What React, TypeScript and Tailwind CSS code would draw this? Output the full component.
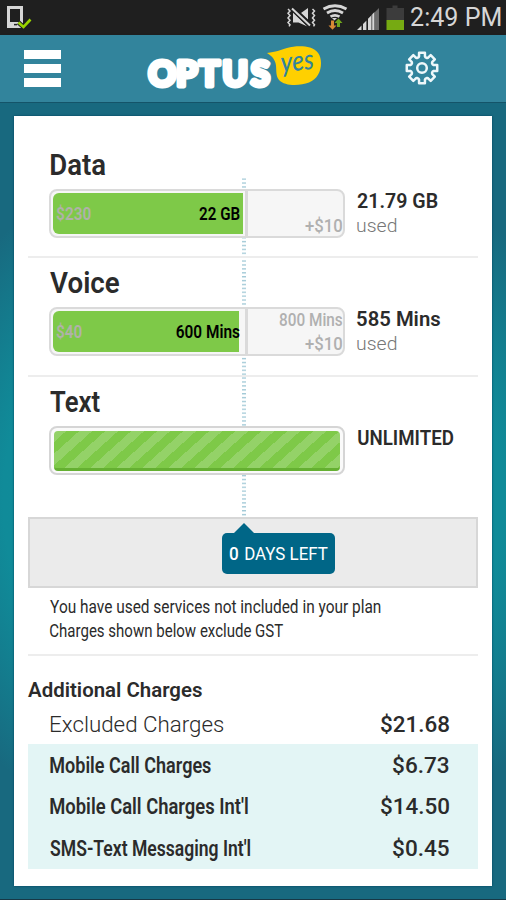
import { useLayoutEffect, useRef, useState } from "react";
import clsx from "clsx";

/** One line of condensed lettering whose ink fills exactly `width` pixels. */
function Line({ text, width, className }: { text: string; width: number; className?: string }) {
  const ref = useRef<HTMLSpanElement>(null);
  const [transform, setTransform] = useState("none");
  useLayoutEffect(() => {
    const el = ref.current;
    const ctx = document.createElement("canvas").getContext("2d");
    if (!el || !ctx) return;
    const cs = getComputedStyle(el);
    ctx.font = `${cs.fontWeight} ${cs.fontSize} Roboto`;
    const m = ctx.measureText(text);
    const left = -m.actualBoundingBoxLeft;
    const s = width / (m.actualBoundingBoxRight - left);
    setTransform(`translateX(${0.1 - left * s}px) scaleX(${s})`);
  }, [text, width]);
  return (
    <span className={clsx("block shrink-0 leading-none whitespace-nowrap", className)} style={{ width }}>
      <span ref={ref} className="inline-block origin-left align-top" style={{ transform }}>
        {text}
      </span>
    </span>
  );
}

function PhoneCheck() {
  return (
    <svg className="h-[35px] w-[36px]" viewBox="0 0 36 35">
      <path fillRule="evenodd" fill="#d6d6d6" d="M7 6h16v22H7zM10 9v13h10V9z" />
      <path d="M14 24.600h3" stroke="#222" strokeWidth="1.500" />
      <path d="M18.500 22.500l5 4.500 7-7.500" fill="none" stroke="#1f1f1f" strokeWidth="4.500" />
      <path d="M18.500 22.500l5 4.500 7-7.500" fill="none" stroke="#99d400" strokeWidth="2.600" />
    </svg>
  );
}

function StatusIcons() {
  return (
    <svg className="h-[35px] w-[120px]" viewBox="286 0 120 35">
      <g fill="none" stroke="#d6d6d6" strokeWidth="1.500">
        <path d="M288 9l2 2-2 2.300 2 2.300-2 2.300 2 2.300-2 2.300 2 2.300-1 1.500" />
        <path d="M312.500 9l2 2-2 2.300 2 2.300-2 2.300 2 2.300-2 2.300 2 2.300-1 1.500" />
      </g>
      <path d="M293 12.500v10h5.500l9 4zM301 13l7-5v11.500z" fill="#d6d6d6" />
      <path d="M292.500 8.500l17.500 17" stroke="#1f1f1f" strokeWidth="5" />
      <path d="M292 8.500l18 17" stroke="#d6d6d6" strokeWidth="2" />
      <g fill="none" stroke="#d6d6d6" strokeWidth="2.800">
        <path d="M323.500 9q11.500-6.500 23 0" />
        <path d="M327 13q8-5 16 0" />
        <path d="M330.500 16.600q4.500-2.600 9 0" />
      </g>
      <path d="M332 18h5l-2.500 2.500z" fill="#d6d6d6" />
      <path d="M331 20.500h3v5h2.500l-4 4.300-4-4.300h2.500z" fill="#d88a35" />
      <path d="M337 27v-4h-2.500l4-4.500 4 4.500H340v4z" fill="#6fa51c" />
      <path d="M363 24l3.500-3.500V30H363zM368 18.800l3.500-3.500V30H368zM357 30l4.500-4.500V30z" fill="#d6d6d6" />
      <path d="M373 13.500l1.500-1.500V30H371V15.500z" fill="#d6d6d6" />
      <path d="M375 12l4-4v22h-4z" fill="#6b6b6b" />
      <path d="M367.200 17v13M371.800 14v16" stroke="#1f1f1f" strokeWidth=".7" />
      <path d="M386.500 8h6V5.500h5V8h6.500v12h-17.500z" fill="#3c3c3c" />
      <path d="M386.500 20H404v10h-17.500z" fill="#76aa12" />
    </svg>
  );
}

function Logo() {
  return (
    <svg className="h-[64px] w-[180px]" viewBox="144 36 180 64">
      <text
        x="148.500 176.300 199.300 222.500 251" y="86.200" fontSize="34"
        fill="#fff" stroke="#fff" strokeWidth="5" strokeLinejoin="round"
        className="font-['Lato',sans-serif] font-bold"
      >
        OPTUS
      </text>
      <path
        d="M267 53C276 52 280 50 287 48C294 46 303 45.500 310 47.500C317 49.500 321 55 321 63C321 72 317 79 309 82.500C300 86 285 86.500 279 80C275 75 277 68 275.500 63C274 58 271 55.500 267 53z"
        fill="#ffd000"
      />
      <text
        x="281" y="70.500" fontSize="28" textLength="33" lengthAdjust="spacingAndGlyphs" fill="#32849c"
        transform="rotate(-6 298 66)" className="font-['Lato',sans-serif] font-medium italic"
      >
        yes
      </text>
    </svg>
  );
}

const gearOutline = Array.from({ length: 8 }, (_, i) => {
  const a = (i * Math.PI) / 4 - Math.PI / 2;
  return [
    [-0.32, 11.200],
    [-0.25, 12],
    [-0.19, 15.500],
    [0.19, 15.500],
    [0.25, 12],
    [0.32, 11.200],
  ]
    .map(([d, r]) => `${(18 + r * Math.cos(a + d)).toFixed(2)},${(18 + r * Math.sin(a + d)).toFixed(2)}`)
    .join(" ");
}).join(" ");

function Gear() {
  return (
    <svg className="h-9 w-9" viewBox="0 0 36 36" fill="none" stroke="#eef7fa" strokeWidth="2.500" strokeLinejoin="round">
      <polygon points={gearOutline} />
      <circle cx="18" cy="18" r="4.800" />
    </svg>
  );
}

type MeterProps = { fill: string; price: string; priceW: number; quota: string; quotaW: number; extra?: string };

function Meter({ fill, price, priceW, quota, quotaW, extra }: MeterProps) {
  return (
    <div className="relative flex h-[49px] w-[296px] shrink-0 overflow-hidden rounded-lg border-2 border-[#dadada] bg-[#f6f6f6] text-[19px] font-medium">
      <div className="flex w-[197px] border-r-[3px] border-[#dadada] p-0.5">
        <div className={clsx("flex h-[41px] items-center rounded-l-md bg-[#7ec948] pl-[3px]", fill)}>
          <Line text={price} width={priceW} className="font-semibold text-[#b0b2a8]" />
          <div className="absolute left-[189px] flex -translate-x-full">
            <Line text={quota} width={quotaW} className="font-semibold text-black" />
          </div>
        </div>
      </div>
      <div className="flex flex-1 flex-col items-end justify-end gap-[5px] pr-px pb-px text-[#b0b0b0]">
        {extra && <Line text={extra} width={63} />}
        <Line text="+$10" width={37} />
      </div>
    </div>
  );
}

function Usage({ value, width }: { value: string; width: number }) {
  return (
    <div className="ml-3 flex flex-col pt-[2px]">
      <Line text={value} width={width} className="text-[20.500px] font-semibold" />
      <Line text="used" width={39} className="mt-[5px] text-[18.500px] font-light text-[#777]" />
    </div>
  );
}

const charges = [
  { label: "Mobile Call Charges", w: 161, amount: "$6.73", aw: 56 },
  { label: "Mobile Call Charges Int'l", w: 198, amount: "$14.50", aw: 68.500 },
  { label: "SMS-Text Messaging Int'l", w: 200.500, amount: "$0.45", aw: 56 },
];

export default function App() {
  return (
    <div className="flex h-[900px] w-[506px] flex-col overflow-hidden bg-[#18697f] font-[Roboto,sans-serif] text-[#2b2b2b]">
      <div className="flex h-[35px] shrink-0 justify-between bg-[#1f1f1f]">
        <PhoneCheck />
        <div className="flex">
          <StatusIcons />
          <div className="w-[100px] pt-[5px] pl-[5px]">
            <Line text="2:49 PM" width={90} className="text-[25.500px] text-[#d6d6d6]" />
          </div>
        </div>
      </div>
      <header className="flex h-[68px] shrink-0 items-start border-b border-[#145469] bg-[#32849c] shadow">
        <div className="mt-[15px] ml-6 flex w-[37px] flex-col gap-[5px]">
          <div className="h-[9px] bg-white" />
          <div className="h-[9px] bg-white" />
          <div className="h-[9px] bg-white" />
        </div>
        <div className="mt-px ml-[83px]"><Logo /></div>
        <div className="mt-[15px] ml-20"><Gear /></div>
      </header>
      <main className="flex-1 border-b border-[#173846] bg-[radial-gradient(circle_at_253px_397px,#0f909c_0px,#108b99_250px,#18697f_365px)] px-3.5 pt-[13px]">
        <div className="relative isolate flex h-[770px] flex-col bg-white px-3.5 shadow-[0_0_2px_#00405a]">
          <div className="absolute top-[62px] left-[228px] -z-10 h-[346px] w-1 bg-[repeating-linear-gradient(to_bottom,#fff_0px,#a3cad7_1px,#d5e7ed_2px,#fff_2.500px,#fff_3.900px)]" />

          <section className="h-[142px] border-b-2 border-[#ededed] pt-[34px] pl-[22px]">
            <Line text="Data" width={54} className="ml-[.7px] text-[30px] font-semibold" />
            <div className="-ml-px mt-[9px] flex">
              <Meter fill="w-[190px]" price="$230" priceW={34.500} quota="22 GB" quotaW={41} />
              <Usage value="21.79 GB" width={81} />
            </div>
          </section>

          <section className="h-[118px] pt-[10px] pl-[22px]">
            <Line text="Voice" width={69.500} className="text-[30px] font-semibold" />
            <div className="-ml-px mt-[9px] flex">
              <Meter fill="w-[186px]" price="$40" priceW={25.500} quota="600 Mins" quotaW={63.500} extra="800 Mins" />
              <Usage value="585 Mins" width={83} />
            </div>
          </section>

          <section className="-mt-px h-[143px] border-t-2 border-[#ededed] pt-[10px] pl-[22px]">
            <Line text="Text" width={50} className="text-[30px] font-semibold" />
            <div className="-ml-px mt-[9px] flex">
              <div className="h-[49px] w-[296px] rounded-lg border-2 border-[#d5d5d5] bg-[#fafafa] p-[3px]">
                <div className="h-[40px] rounded border-b-[3px] border-[#65b032] bg-[repeating-linear-gradient(138deg,#94d268_0px,#94d268_8.200px,#7ec948_8.200px,#7ec948_16.900px,#94d268_16.900px,#94d268_17.400px)]" />
              </div>
              <div className="ml-[13px] pt-[2px]">
                <Line text="UNLIMITED" width={95.500} className="text-[20.500px] font-semibold" />
              </div>
            </div>
          </section>

          <section className="-mt-px h-[71px] shrink-0 border-2 border-[#d7d7d7] bg-[#ebebeb] pt-[14px] pl-[192px]">
            <div className="relative flex h-[41px] w-[113px] items-center rounded-[5px] bg-[#006687] pl-[7px] text-white">
              <div className="absolute -top-[10px] left-[11px] h-[11px] w-[22px] bg-[#006687] [clip-path:polygon(50%_0,100%_100%,0_100%)]" />
              <Line text="0" width={9.500} className="text-[18px] font-medium" />
              <Line text="DAYS LEFT" width={83} className="ml-[6px] text-[18px]" />
            </div>
          </section>

          <section className="h-[68px] shrink-0 border-b-2 border-[#ededed] pt-[10px] pl-[22px] text-[18.700px]">
            <Line text="You have used services not included in your plan" width={331} />
            <Line text="Charges shown below exclude GST" width={233} className="mt-[5px]" />
          </section>

          <section className="pt-[24px]">
            <Line text="Additional Charges" width={173.500} className="text-[21px] font-semibold" />
            <div className="mt-[13px] flex h-[30px] justify-between pr-[29px] pl-[22px] text-[22px]">
              <Line text="Excluded Charges" width={173} className="font-light" />
              <Line text="$21.68" width={68.500} className="font-medium" />
            </div>
            <div className="h-[125px] bg-[#e3f5f5] pr-[29px] pl-[22px] text-[22px]">
              {charges.map((c) => (
                <div key={c.label} className="flex h-1/3 items-center justify-between pt-[2px]">
                  <Line text={c.label} width={c.w} className="font-semibold" />
                  <Line text={c.amount} width={c.aw} className="font-medium" />
                </div>
              ))}
            </div>
          </section>
        </div>
      </main>
    </div>
  );
}
